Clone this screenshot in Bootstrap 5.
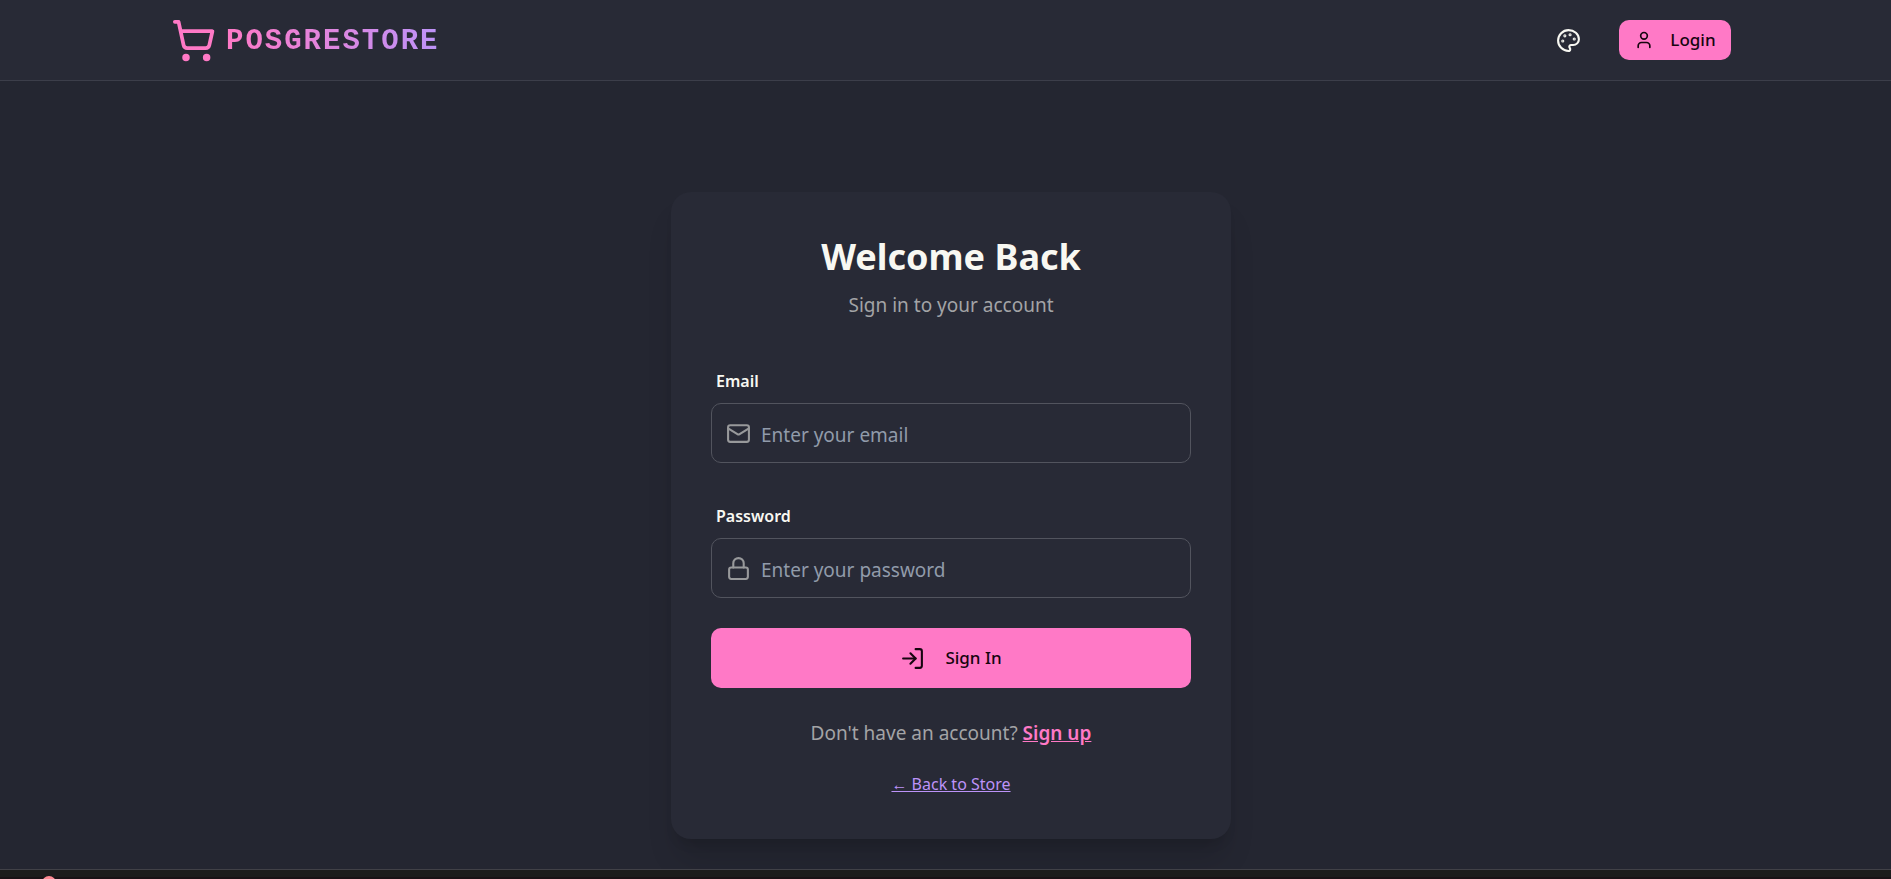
<!DOCTYPE html>
<html lang="en">
<head>
<meta charset="utf-8">
<meta name="viewport" content="width=device-width, initial-scale=1">
<title>POSGRESTORE – Login</title>
<link rel="stylesheet" href="https://cdn.jsdelivr.net/npm/bootstrap@5.3.0/dist/css/bootstrap.min.css">
<style>
:root { --base: #282a36; --page: #242631; --pink: #ff79c6; --violet: #bd93f9; --ink: #f8f8f2; --muted: #a3a4a6; --line: #52545e; }
body { background: var(--page); color: var(--ink); font-family: "Noto Sans", "Open Sans", sans-serif; font-size: 19px; line-height: 30px; }
svg { fill: none; stroke: currentColor; stroke-width: 2; stroke-linecap: round; stroke-linejoin: round; flex: none; }
.gutter { padding-left: 11px; }
.top-bar { background: var(--base); border-bottom: 1px solid #3c3e4a; }
.top-inner { max-width: 1560px; height: 80px; }
.top-actions { gap: 28px; }
.brand { color: var(--pink); text-decoration: none; gap: 10px; }
.brand-name { font: 700 29px/40px "Liberation Mono", monospace; letter-spacing: 2px; padding-top: 4px; background: linear-gradient(90deg, var(--pink), var(--violet)); -webkit-background-clip: text; background-clip: text; color: transparent; }
.theme-btn { background: none; border: 0; color: var(--ink); padding: 10px; }
.theme-btn circle { fill: currentColor; }
.pink-btn { background: var(--pink); color: #16050f; font-size: 17px; font-weight: 500; line-height: 24px; border: 0; border-radius: 10px; }
.pink-btn:hover { background: #f365b8; color: #16050f; }
.login-btn { height: 40px; width: 112px; gap: 16px; }
.sign-btn { height: 60px; gap: 20px; }
.panel { width: 560px; max-width: 100%; background: var(--base); border-radius: 20px; padding: 40px; margin-bottom: 30px; box-shadow: 0 25px 30px -5px rgba(0,0,0,.12), 0 10px 12px -6px rgba(0,0,0,.12); }
.panel-head { margin-bottom: 38px; }
.panel-title { font-size: 36px; line-height: 50px; font-weight: 700; }
.space-lg { margin-top: 30px; }
.space-md { margin-top: 20px; }
.muted { color: var(--muted); }
.field-label { font-size: 16px; line-height: 25px; font-weight: 600; padding: 11px 5px 9px; display: block; }
.field-box { height: 60px; border: 1px solid var(--line); border-radius: 10px; padding: 0 14px; gap: 10px; color: #98999b; }
.field-box:focus-within { border-color: var(--pink); }
.field-box input { background: none; border: 0; outline: 0; color: var(--ink); font-size: 19px; padding: 4px 0 0; min-width: 0; }
.field-box input::placeholder { color: #919baa; opacity: 1; }
.up-link { color: var(--pink); font-weight: 600; }
.back-link { color: var(--violet); font-size: 16px; }
.foot { height: 10px; background: linear-gradient(#1c1c1c 7px, #191216 7px); border-top: 1px solid #414147; padding-left: 42px; overflow: hidden; }
.dot { display: block; width: 14px; height: 14px; margin-top: 6px; border-radius: 50%; background: #ff8a94; }
</style>
</head>
<body>
<div class="d-flex flex-column min-vh-100">
  <header class="top-bar gutter">
    <div class="top-inner mx-auto d-flex align-items-center justify-content-between">
      <a class="brand d-flex align-items-center" href="#">
        <svg width="45" height="45" viewBox="0 0 24 24"><circle cx="8" cy="21" r="1"/><circle cx="19" cy="21" r="1"/><path d="M2.05 2.05h2l2.66 12.42a2 2 0 0 0 2 1.58h9.78a2 2 0 0 0 1.95-1.57l1.65-7.43H5.12"/></svg>
        <span class="brand-name">POSGRESTORE</span>
      </a>
      <div class="top-actions d-flex align-items-center">
        <button class="theme-btn d-flex" type="button" aria-label="Theme">
          <svg width="25" height="25" viewBox="0 0 24 24"><circle cx="13.5" cy="6.5" r=".5"/><circle cx="17.5" cy="10.5" r=".5"/><circle cx="8.5" cy="7.5" r=".5"/><circle cx="6.5" cy="12.5" r=".5"/><path d="M12 2C6.5 2 2 6.5 2 12s4.5 10 10 10c.926 0 1.648-.746 1.648-1.688 0-.437-.18-.835-.437-1.125-.29-.289-.438-.652-.438-1.125a1.64 1.64 0 0 1 1.668-1.668h1.996c3.051 0 5.555-2.503 5.555-5.554C21.965 6.012 17.461 2 12 2z"/></svg>
        </button>
        <a class="btn pink-btn login-btn d-flex align-items-center justify-content-center p-0" href="#">
          <svg width="20" height="20" viewBox="0 0 24 24"><path d="M19 21v-2a4 4 0 0 0-4-4H9a4 4 0 0 0-4 4v2"/><circle cx="12" cy="7" r="4"/></svg>
          Login
        </a>
      </div>
    </div>
  </header>

  <main class="gutter flex-grow-1 d-flex align-items-end justify-content-center">
    <div class="panel mt-5">
      <div class="panel-head text-center">
        <h1 class="panel-title mb-0">Welcome Back</h1>
        <p class="muted mb-0 mt-2">Sign in to your account</p>
      </div>
      <form>
        <label class="field-label" for="email">Email</label>
        <div class="field-box d-flex align-items-center">
          <svg width="25" height="25" viewBox="0 0 24 24"><rect x="2" y="4" width="20" height="16" rx="2"/><path d="m22 7-8.97 5.7a1.94 1.94 0 0 1-2.06 0L2 7"/></svg>
          <input class="flex-grow-1" id="email" type="email" placeholder="Enter your email">
        </div>
        <label class="field-label space-lg" for="password">Password</label>
        <div class="field-box d-flex align-items-center">
          <svg width="25" height="25" viewBox="0 0 24 24"><rect x="3" y="11" width="18" height="11" rx="2"/><path d="M7 11V7a5 5 0 0 1 10 0v4"/></svg>
          <input class="flex-grow-1" id="password" type="password" placeholder="Enter your password">
        </div>
        <button class="btn pink-btn sign-btn space-lg w-100 d-flex align-items-center justify-content-center" type="submit">
          <svg width="25" height="25" viewBox="0 0 24 24"><path d="M15 3h4a2 2 0 0 1 2 2v14a2 2 0 0 1-2 2h-4"/><path d="m10 17 5-5-5-5"/><path d="M15 12H3"/></svg>
          Sign In
        </button>
      </form>
      <p class="muted text-center space-lg mb-0">Don't have an account? <a class="up-link" href="#">Sign up</a></p>
      <p class="text-center space-md mb-0"><a class="back-link" href="#">← Back to Store</a></p>
    </div>
  </main>

  <footer class="foot"><span class="dot"></span></footer>
</div>
<script src="https://cdn.jsdelivr.net/npm/bootstrap@5.3.0/dist/js/bootstrap.bundle.min.js"></script>
</body>
</html>
